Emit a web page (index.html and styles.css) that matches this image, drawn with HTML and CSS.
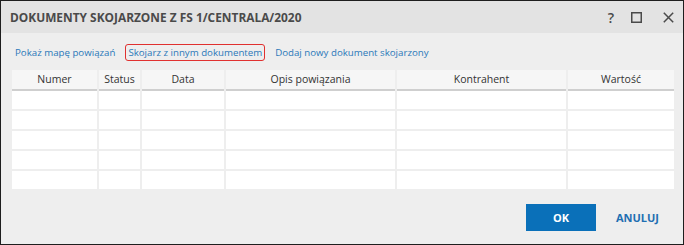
FILE: index.html
```html
<!DOCTYPE html>
<html lang="pl">
<head>
    <meta charset="UTF-8">
    <title>Dokumenty skojarzone</title>
    <link rel="stylesheet" href="styles.css">
</head>
<body>
    <div class="dialog">
        <header class="titlebar">
            <h1>DOKUMENTY SKOJARZONE Z FS 1/CENTRALA/2020</h1>
            <div class="window-buttons">
                <span class="help">?</span>
                <svg class="maximize" width="11" height="11" viewBox="0 0 11 11"><rect x="0.75" y="0.75" width="9.5" height="9.5" fill="none" stroke="#4a4a4a" stroke-width="1.5"/></svg>
                <svg width="11" height="11" viewBox="0 0 11 11"><path d="M0.8 0.8 L10.2 10.2 M10.2 0.8 L0.8 10.2" stroke="#4a4a4a" stroke-width="1.5"/></svg>
            </div>
        </header>

        <!-- links -->
        <nav class="links">
            <a href="#">Pokaż mapę powiązań</a>
            <a href="#" class="active">Skojarz z innym dokumentem</a>
            <a href="#">Dodaj nowy dokument skojarzony</a>
        </nav>

        <!-- table -->
        <div class="grid">
            <div class="th">Numer</div>
            <div class="th">Status</div>
            <div class="th">Data</div>
            <div class="th">Opis powiązania</div>
            <div class="th">Kontrahent</div>
            <div class="th">Wartość</div>
            <div class="td"></div><div class="td"></div><div class="td"></div><div class="td"></div><div class="td"></div><div class="td"></div>
            <div class="td"></div><div class="td"></div><div class="td"></div><div class="td"></div><div class="td"></div><div class="td"></div>
            <div class="td"></div><div class="td"></div><div class="td"></div><div class="td"></div><div class="td"></div><div class="td"></div>
            <div class="td"></div><div class="td"></div><div class="td"></div><div class="td"></div><div class="td"></div><div class="td"></div>
            <div class="td"></div><div class="td"></div><div class="td"></div><div class="td"></div><div class="td"></div><div class="td"></div>
        </div>

        <footer class="buttons">
            <button class="btn primary">OK</button>
            <button class="btn">ANULUJ</button>
        </footer>
    </div>
</body>
</html>
```

FILE: styles.css
```css
body {
    margin: 0;
    font-family: "Open Sans", "Noto Sans", sans-serif;
}
.dialog {
    width: 684px;
    height: 245px;
    box-sizing: border-box;
    border: 1px solid #1e1e1e;
    background-color: #eeeeee;
    display: flex;
    flex-direction: column;
}
.titlebar {
    height: 32px;
    background-color: #e3e3e3;
    display: flex;
    align-items: center;
    justify-content: space-between;
    padding: 0 9px 0 9px;
}
.titlebar h1 {
    margin: 0;
    font-size: 11.9px;
    font-weight: 700;
    color: #4a4a4a;
}
.window-buttons {
    display: flex;
    align-items: center;
}
.help {
    font-size: 14px;
    font-weight: 600;
    color: #4a4a4a;
    margin-right: 17px;
}
.maximize {
    margin-right: 21px;
}
.links {
    display: flex;
    align-items: center;
    gap: 7px;
    padding: 11px 0 0 11px;
}
.links a {
    font-size: 9.7px;
    color: #2a78b9;
    text-decoration: none;
    padding: 1px 2px;
    border: 1px solid transparent;
    border-radius: 3px;
}
.links a.active {
    border-color: #e0302f;
}
.grid {
    display: grid;
    grid-template-columns: 85px 41px 82px 169px 169px 106px;
    column-gap: 2px;
    row-gap: 2px;
    margin: 9px 0 0 11px;
}
.th {
    height: 19px;
    line-height: 19px;
    background-color: #f6f6f6;
    border-bottom: 2px solid #cfcfcf;
    margin-bottom: -2px;
    text-align: center;
    font-size: 10.5px;
    color: #333;
}
.td {
    height: 18px;
    background-color: #ffffff;
}
.buttons {
    display: flex;
    justify-content: flex-end;
    gap: 18px;
    margin-top: auto;
    padding: 0 22px 13px 0;
}
.btn {
    font-family: inherit;
    font-size: 11px;
    font-weight: 700;
    color: #1f6fb2;
    background: none;
    border: none;
    height: 27px;
    padding: 0 2px;
}
.btn.primary {
    width: 70px;
    background-color: #0a70b9;
    color: #ffffff;
}
```
